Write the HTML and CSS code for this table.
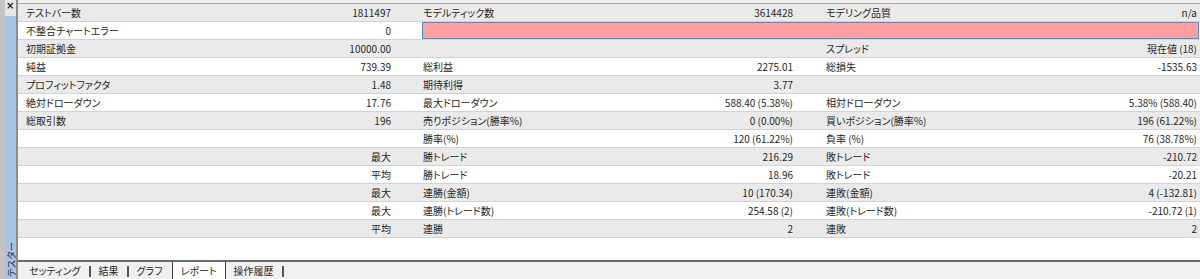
FILE: index.html
```html
<!DOCTYPE html>
<html lang="ja">
<head>
<meta charset="utf-8">
<title>テスター レポート</title>
<link rel="stylesheet" href="styles.css">
</head>
<body>
<div class="app">
  <aside class="side">
    <div class="side-top"><span class="close">×</span></div>
    <div class="side-bar"><span class="side-title">テスター</span></div>
  </aside>
  <main class="main">
    <div class="report">
      <div class="row g"><span class="l">テストバー数</span><span class="v">1811497</span><span class="l">モデルティック数</span><span class="v">3614428</span><span class="l">モデリング品質</span><span class="v">n/a</span></div>
      <div class="row w"><span class="l">不整合チャートエラー</span><span class="v">0</span><span class="bar"></span></div>
      <div class="row g"><span class="l">初期証拠金</span><span class="v">10000.00</span><span class="l"></span><span class="v"></span><span class="l">スプレッド</span><span class="v">現在値 (18)</span></div>
      <div class="row w"><span class="l">純益</span><span class="v">739.39</span><span class="l">総利益</span><span class="v">2275.01</span><span class="l">総損失</span><span class="v">-1535.63</span></div>
      <div class="row g"><span class="l">プロフィットファクタ</span><span class="v">1.48</span><span class="l">期待利得</span><span class="v">3.77</span><span class="l"></span><span class="v"></span></div>
      <div class="row w"><span class="l">絶対ドローダウン</span><span class="v">17.76</span><span class="l">最大ドローダウン</span><span class="v">588.40 (5.38%)</span><span class="l">相対ドローダウン</span><span class="v">5.38% (588.40)</span></div>
      <div class="row g"><span class="l">総取引数</span><span class="v">196</span><span class="l">売りポジション(勝率%)</span><span class="v">0 (0.00%)</span><span class="l">買いポジション(勝率%)</span><span class="v">196 (61.22%)</span></div>
      <div class="row w"><span class="l"></span><span class="v"></span><span class="l">勝率(%)</span><span class="v">120 (61.22%)</span><span class="l">負率 (%)</span><span class="v">76 (38.78%)</span></div>
      <div class="row g"><span class="l"></span><span class="v">最大</span><span class="l">勝トレード</span><span class="v">216.29</span><span class="l">敗トレード</span><span class="v">-210.72</span></div>
      <div class="row w"><span class="l"></span><span class="v">平均</span><span class="l">勝トレード</span><span class="v">18.96</span><span class="l">敗トレード</span><span class="v">-20.21</span></div>
      <div class="row g"><span class="l"></span><span class="v">最大</span><span class="l">連勝(金額)</span><span class="v">10 (170.34)</span><span class="l">連敗(金額)</span><span class="v">4 (-132.81)</span></div>
      <div class="row w"><span class="l"></span><span class="v">最大</span><span class="l">連勝(トレード数)</span><span class="v">254.58 (2)</span><span class="l">連敗(トレード数)</span><span class="v">-210.72 (1)</span></div>
      <div class="row g"><span class="l"></span><span class="v">平均</span><span class="l">連勝</span><span class="v">2</span><span class="l">連敗</span><span class="v">2</span></div>
      <div class="row w last"></div>
    </div>
    <nav class="tabs">
      <span class="tab">セッティング</span><span class="sep"></span>
      <span class="tab">結果</span><span class="sep"></span>
      <span class="tab">グラフ</span>
      <span class="tab active">レポート</span>
      <span class="tab">操作履歴</span><span class="sep"></span>
    </nav>
  </main>
</div>
</body>
</html>
```
FILE: styles.css
```css
* { box-sizing: border-box; }
html, body { margin: 0; padding: 0; }
body {
  width: 1200px;
  height: 279px;
  overflow: hidden;
  background: #f0f0f0;
  font-family: "Noto Sans CJK JP", "Noto Sans", sans-serif;
  font-size: 10px;
  font-feature-settings: "palt";
  color: #262626;
}
.app { display: flex; height: 279px; }
.side {
  width: 18px;
  flex: none;
  display: flex;
  flex-direction: column;
  border-left: 5px solid #c4c4c4;
  border-right: 2px solid #8c8c8c;
  background: #e6e6e6;
}
.side-top { height: 16px; flex: none; position: relative; }
.close {
  position: absolute;
  left: 1px;
  top: 1px;
  font-size: 10px;
  line-height: 10px;
  font-weight: bold;
  color: #222;
  font-family: "DejaVu Sans", sans-serif;
}
.side-bar {
  flex: 1;
  background: #a6c4e6;
  display: flex;
  flex-direction: column;
  justify-content: flex-end;
  align-items: center;
}
.side-title {
  writing-mode: vertical-rl;
  text-orientation: sideways;
  transform: rotate(180deg);
  font-size: 9.5px;
  line-height: 10px;
  color: #1e2a3a;
  margin-bottom: 2px;
}
.main { flex: 1; display: flex; flex-direction: column; }
.report {
  margin-top: 3px;
  border-top: 1px solid #a8a8a8;
  height: 257px;
  background: #fff;
}
.row {
  display: grid;
  grid-template-columns: 222px 182px 218px 185px 215px 160px;
  height: 18px;
  border-bottom: 1px solid #d2d2d2;
  line-height: 17px;
  white-space: nowrap;
}
.row.g { background: #eaeaea; }
.row.w { background: #fff; }
.row.last { border-bottom: none; height: 22px; }
.l { padding-left: 8px; }
.row > .l:nth-child(3) { padding-left: 1px; }
.row > .l:nth-child(5) { padding-left: 1px; }
.v { text-align: right; padding-right: 31px; }
.row > .v:nth-child(4) { padding-right: 32px; }
.row > .v:nth-child(6) { padding-right: 3px; }
.bar {
  grid-column: 3 / 7;
  background: #ff9f9f;
  border: 1px solid #4f8fd6;
  margin-right: 1px;
  height: 17px;
}
.tabs {
  flex: 1;
  display: flex;
  align-items: stretch;
  border-top: 2px solid #6a6a6a;
  padding-left: 3px;
  background: #f0f0f0;
  line-height: 17px;
}
.tab { padding: 0 8px; color: #262626; }
.tab.active {
  background: #fff;
  border-left: 1px solid #3a3a3a;
  border-right: 1px solid #3a3a3a;
  margin-left: 1px;
  padding: 0 8px;
}
.sep {
  width: 2px;
  height: 11px;
  margin-top: 4px;
  background: #555;
}
```
